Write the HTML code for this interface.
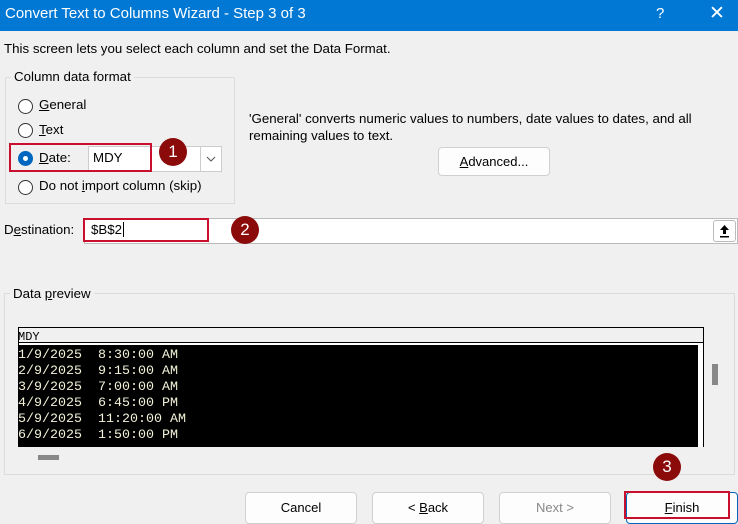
<!DOCTYPE html>
<html><head><style>
*{margin:0;padding:0;box-sizing:border-box}
body{width:738px;height:519px;overflow:hidden;background:#f0f0f0;font-family:"Segoe UI","Liberation Sans",sans-serif;font-size:13.3px;color:#000;position:relative}
.a{position:absolute;white-space:nowrap}
.title{left:0;top:0;width:738px;height:31px;background:#0078d4;color:#fff}
.radio{width:15px;height:15px;border:1px solid #333;border-radius:50%;background:#fff}
.btn{background:#fdfdfd;border:1px solid #d0d0d0;border-radius:4px;text-align:center;line-height:26px;font-size:13px}
.circ{width:28px;height:28px;border-radius:50%;background:#8b0a0a;color:#fff;text-align:center;line-height:28px;font-size:17px}
.red{border:2px solid #c8102e}
.mono{font-family:"Liberation Mono",monospace;font-size:13.33px;line-height:16px;color:#f3f0d8;white-space:pre}
u{text-decoration:underline}
</style></head><body>
<div class="a title"></div>
<div class="a" style="left:5px;top:5px;font-size:15px;color:#fff">Convert Text to Columns Wizard - Step 3 of 3</div>
<div class="a" style="left:656px;top:5px;font-size:15px;color:#fff">?</div>
<div class="a" style="left:709px;top:2px;font-size:19px;color:#fff">✕</div>
<div class="a" style="left:4px;top:41px">This screen lets you select each column and set the Data Format.</div>

<div class="a" style="left:5px;top:77px;width:230px;height:127px;border:1px solid #dcdcdc"></div>
<div class="a" style="left:11px;top:69px;background:#f0f0f0;padding:0 3px">Column data format</div>
<div class="a radio" style="left:18px;top:99px"></div><div class="a" style="left:39px;top:97px"><u>G</u>eneral</div>
<div class="a radio" style="left:18px;top:123px"></div><div class="a" style="left:39px;top:122px"><u>T</u>ext</div>
<div class="a radio" style="left:18px;top:151px;border:1px solid #0067c0;background:#0067c0"><div style="position:absolute;left:4px;top:4px;width:5px;height:5px;border-radius:50%;background:#fff"></div></div>
<div class="a" style="left:39px;top:150px"><u>D</u>ate:</div>
<div class="a" style="left:88px;top:146px;width:134px;height:26px;background:#fff;border:1px solid #ccc"></div>
<div class="a" style="left:200px;top:146px;width:22px;height:26px;border:1px solid #ccc;background:#fff"><svg width="20" height="24" style="position:absolute;left:0;top:0"><path d="M6 10 L10 14 L14 10" fill="none" stroke="#555" stroke-width="1"/></svg></div>
<div class="a" style="left:93px;top:150px">MDY</div>
<div class="a red" style="left:9px;top:143px;width:143px;height:29px"></div>
<div class="a circ" style="left:159px;top:138px">1</div>
<div class="a radio" style="left:18px;top:180px"></div><div class="a" style="left:39px;top:178px">Do not <u>i</u>mport column (skip)</div>

<div class="a" style="left:249px;top:110px;line-height:17px">'General' converts numeric values to numbers, date values to dates, and all<br>remaining values to text.</div>
<div class="a btn" style="left:438px;top:147px;width:112px;height:29px;line-height:27px"><u>A</u>dvanced...</div>

<div class="a" style="left:4px;top:222px">D<u>e</u>stination:</div>
<div class="a" style="left:84px;top:218px;width:654px;height:26px;background:#fff;border:1px solid #bbb"></div>
<div class="a" style="left:91px;top:222px">$B$2<span style="border-left:1px solid #000;margin-left:1px"></span></div>
<div class="a red" style="left:83px;top:218px;width:126px;height:24px"></div>
<div class="a circ" style="left:231px;top:216px">2</div>
<div class="a" style="left:713px;top:220px;width:23px;height:22px;border:1px solid #bbb;border-radius:3px;background:#fff"><svg width="21" height="20" style="position:absolute;left:0;top:0"><path d="M10.5 4 L15 9 L12 9 L12 13 L9 13 L9 9 L6 9 Z" fill="#000"/><rect x="6" y="15" width="9" height="1.5" fill="#000"/></svg></div>

<div class="a" style="left:4px;top:293px;width:731px;height:182px;border:1px solid #dcdcdc"></div>
<div class="a" style="left:10px;top:286px;background:#f0f0f0;padding:0 3px">Data <u>p</u>review</div>
<div class="a" style="left:18px;top:327px;width:686px;height:120px;border:1px solid #000;border-bottom:none;background:#fff"></div>
<div class="a" style="left:19px;top:328px;width:684px;height:15px;background:#f0f0f0;border-bottom:1px solid #000"></div>
<div class="a mono" style="left:18px;top:330px;color:#000;font-size:12px;line-height:14px">MDY</div>
<div class="a" style="left:18px;top:345px;width:680px;height:102px;background:#000"></div>
<div class="a mono" style="left:18px;top:348px">1/9/2025  8:30:00 AM
2/9/2025  9:15:00 AM
3/9/2025  7:00:00 AM
4/9/2025  6:45:00 PM
5/9/2025  11:20:00 AM
6/9/2025  1:50:00 PM</div>
<div class="a" style="left:712px;top:364px;width:6px;height:21px;background:#888"></div>
<div class="a" style="left:38px;top:455px;width:21px;height:5px;background:#888"></div>

<div class="a circ" style="left:653px;top:453px">3</div>
<div class="a btn" style="left:245px;top:492px;width:112px;height:32px;padding-top:2px">Cancel</div>
<div class="a btn" style="left:372px;top:492px;width:112px;height:32px;padding-top:2px">&lt; <u>B</u>ack</div>
<div class="a btn" style="left:499px;top:492px;width:112px;height:32px;padding-top:2px;color:#888">Next &gt;</div>
<div class="a btn" style="left:626px;top:492px;width:112px;height:32px;padding-top:2px;border-color:#0067c0"><u>F</u>inish</div>
<div class="a red" style="left:624px;top:491px;width:106px;height:28px"></div>
</body></html>
